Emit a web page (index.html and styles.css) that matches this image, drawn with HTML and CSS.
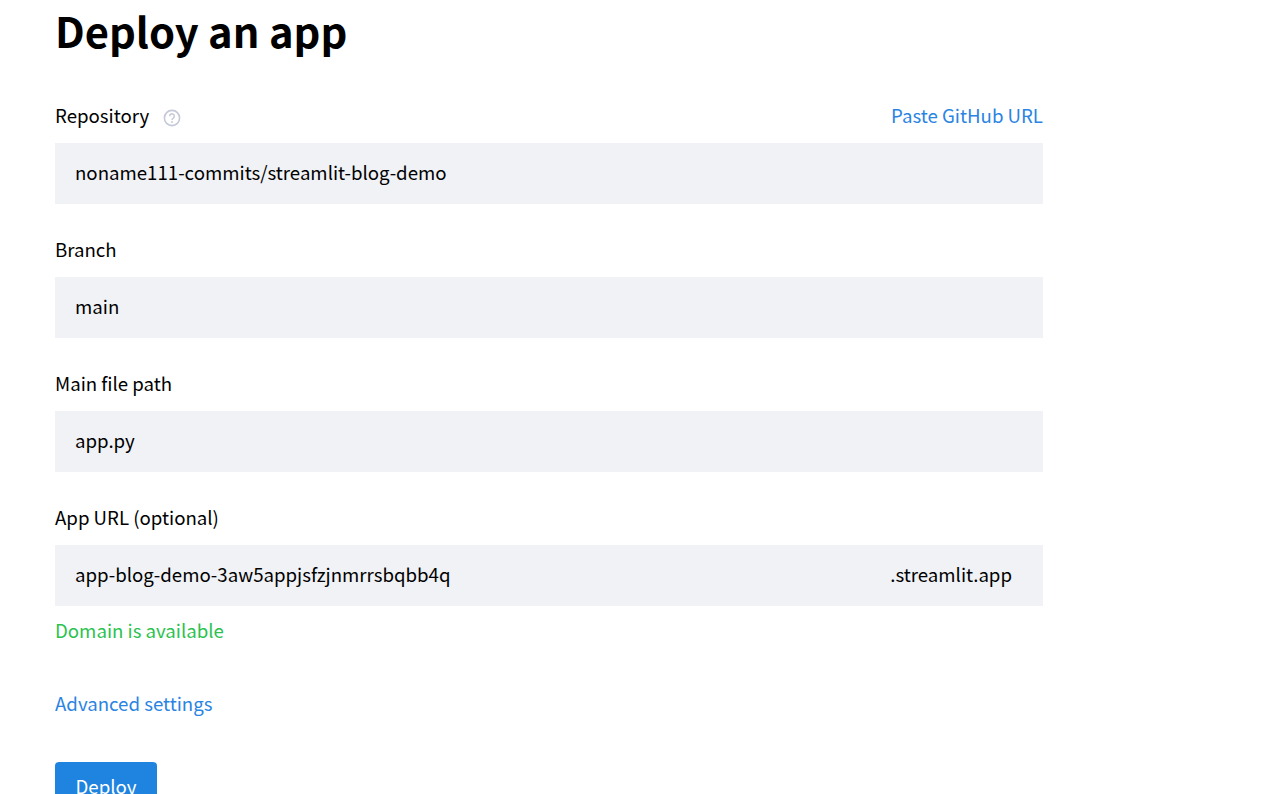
FILE: index.html
```html
<!DOCTYPE html>
<html lang="en">
<head>
<meta charset="utf-8">
<title>Deploy an app</title>
<link rel="stylesheet" href="styles.css">
</head>
<body>
<main class="page">
  <h1 class="title">Deploy an app</h1>
  <form class="form">
    <div class="field">
      <div class="label-row">
        <div class="label-group">
          <span class="label">Repository</span>
          <svg class="help" width="18" height="18" viewBox="0 0 18 18" aria-hidden="true">
            <circle cx="9" cy="9" r="7.6" fill="none" stroke="#c4c8d8" stroke-width="1.6"/>
            <path d="M6.7 7.2a2.3 2.3 0 1 1 3.6 1.9c-.8.5-1.3 1-1.3 1.9" fill="none" stroke="#c4c8d8" stroke-width="1.5"/>
            <circle cx="9" cy="13" r=".95" fill="#c4c8d8"/>
          </svg>
        </div>
        <a class="link" href="#">Paste GitHub URL</a>
      </div>
      <div class="input">noname111-commits/streamlit-blog-demo</div>
    </div>
    <div class="field">
      <div class="label-row"><span class="label">Branch</span></div>
      <div class="input">main</div>
    </div>
    <div class="field">
      <div class="label-row"><span class="label">Main file path</span></div>
      <div class="input">app.py</div>
    </div>
    <div class="field field-url">
      <div class="label-row"><span class="label">App URL (optional)</span></div>
      <div class="input input-url"><span>app-blog-demo-3aw5appjsfzjnmrrsbqbb4q</span><span>.streamlit.app</span></div>
      <div class="status">Domain is available</div>
    </div>
    <a class="link advanced" href="#">Advanced settings</a>
    <button class="deploy" type="button">Deploy</button>
  </form>
</main>
</body>
</html>
```

FILE: styles.css
```css
html, body {
  margin: 0;
  padding: 0;
  background: #fff;
  overflow: hidden;
  height: 794px;
}
body {
  font-family: "Noto Sans CJK JP", "Noto Sans", sans-serif;
  font-size: 18.65px;
  color: #000;
}
.page {
  width: 988px;
  margin-left: 55px;
}
.title {
  margin: 0;
  height: 98px;
  font-size: 41.7px;
  line-height: 60px;
  font-weight: 700;
  color: #000;
}
.form {
  display: flex;
  flex-direction: column;
}
.field {
  display: flex;
  flex-direction: column;
  margin-bottom: 28px;
}
.label-row {
  display: flex;
  justify-content: space-between;
  align-items: center;
  height: 33px;
  margin-bottom: 12px;
}
.label-group {
  display: flex;
  align-items: center;
  gap: 14px;
}
.label {
  line-height: 33px;
}
.help {
  display: block;
  margin-top: 6px;
}
.link {
  color: #2a84e2;
  text-decoration: none;
}
.input {
  height: 61px;
  padding: 0 20px;
  background: #f0f2f6;
  line-height: 58px;
}
.input-url {
  display: flex;
  justify-content: space-between;
  padding-right: 31px;
}
.field-url {
  margin-bottom: 0;
}
.status {
  margin-top: 9px;
  line-height: 30px;
  color: #2bc24f;
}
.advanced {
  margin-top: 43px;
  line-height: 30px;
  align-self: flex-start;
}
.deploy {
  align-self: flex-start;
  width: 102px;
  height: 48px;
  margin-top: 44px;
  padding: 0 0 2px;
  border: 0;
  border-radius: 4px;
  background: #1f83e0;
  color: #fff;
  font: inherit;
}
```
